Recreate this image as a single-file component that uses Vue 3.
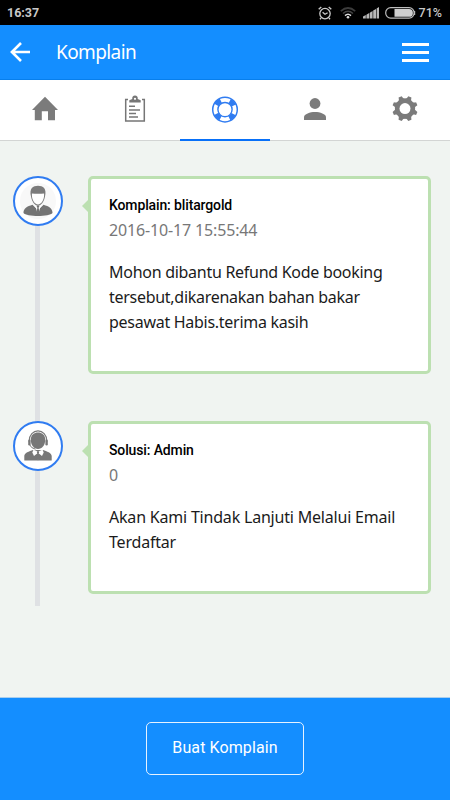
<template>
  <div class="screen">
    <div class="status-bar">
      <span class="clock">16:37</span>
      <div class="status-icons">
        <svg class="alarm" width="14" height="14" viewBox="0 0 14 14" fill="none" stroke="#c9c9c9">
          <circle cx="7" cy="7.6" r="5.2" stroke-width="1.3" />
          <path d="M.7 3.2 3.3.9M13.3 3.2 10.7.9M3 12l-1 1.2M11 12l1 1.2" stroke-width="1.4" />
          <path d="M4.6 6.2 7 8.3l2.6-1.6" stroke-width="1.3" />
        </svg>
        <svg class="wifi" width="16" height="12" viewBox="0 0 16 12" fill="none">
          <path d="M.8 4.2Q8-2.2 15.2 4.2" stroke="#3c3c3c" stroke-width="1.7" />
          <path d="M3 6.5Q8 2 13 6.5" stroke="#444" stroke-width="1.5" />
          <path d="M5 8.6Q8 6 11 8.6" stroke="#ddd" stroke-width="1.5" />
          <circle cx="8" cy="10.3" r="1.3" fill="#ddd" />
        </svg>
        <svg class="signal" width="17" height="12" viewBox="0 0 17 12" fill="#b8b8b8">
          <path d="M0 9.5 2.8 8v3.5H0zM3.4 7.8 6.2 6v5.5H3.4zM6.8 5.8 9.6 4v7.5H6.8zM10.2 3.6 13 2v9.5h-2.8zM13.6 1.5 16 0v11.5h-2.4z" />
        </svg>
        <svg class="battery" width="31" height="12" viewBox="0 0 31 12">
          <rect x=".7" y=".7" width="28.4" height="10.4" rx="5" fill="none" stroke="#bdbdbd" stroke-width="1.2" />
          <path d="M9.5 2H24a3.9 3.9 0 0 1 0 7.8H9.5z" fill="#cfcfcf" />
          <path d="M29.6 4v4" stroke="#bdbdbd" stroke-width="1.2" />
        </svg>
        <span class="percent">71%</span>
      </div>
    </div>

    <header class="app-bar">
      <svg class="back" width="20" height="20" viewBox="0 0 20 20" fill="none" stroke="#fff" stroke-width="2.6">
        <path d="M11 1 1.9 10 11 19M2 10h18" />
      </svg>
      <h1>Komplain</h1>
      <div class="menu"><i></i><i></i><i></i></div>
    </header>

    <nav class="tabs">
      <div v-for="tab in tabs" :key="tab" class="tab" :class="{ active: tab === 'help' }">
        <svg v-if="tab === 'home'" width="30" height="30" viewBox="0 0 30 30" fill="#7b7b7b">
          <path d="M15 2.8 28 15.9h-3v10.3h-7v-8.9h-6.2v8.9h-7V15.9H2z" />
        </svg>
        <svg v-else-if="tab === 'orders'" width="30" height="30" viewBox="0 0 30 30" fill="none" stroke="#767676">
          <path d="M8 5.5H5.700v21.600h18.600V5.500H22" stroke-width="1.5" />
          <path d="M9.300 8.400V6.200l3-1.200a2.800 2.800 0 1 1 5.400 0l3 1.200v2.200z" fill="#767676" stroke="none" />
          <circle cx="15" cy="4.8" r="1.1" fill="#fff" stroke="none" />
          <path d="M9 12.300h6M9 15.900h11M9 19.500h7M9 23.100h9" stroke-width="1.5" />
        </svg>
        <svg v-else-if="tab === 'help'" width="30" height="30" viewBox="0 0 30 30" fill="none" stroke="#307cf1">
          <circle cx="15" cy="15.6" r="9.7" stroke-width="5" stroke-dasharray="6.03 9.206" stroke-dashoffset="-4.6" />
          <circle cx="15" cy="15.6" r="12.3" stroke-width="1.5" />
          <circle cx="15" cy="15.6" r="7.1" stroke-width="1.4" />
        </svg>
        <svg v-else-if="tab === 'account'" width="30" height="30" viewBox="0 0 30 30" fill="#7b7b7b">
          <circle cx="15" cy="9.5" r="5.4" />
          <path d="M4 26.100v-2.700c0-3.400 6-5.300 11-5.300s11 1.900 11 5.300v2.700z" />
        </svg>
        <svg v-else width="30" height="30" viewBox="0 0 30 30">
          <g fill="#7b7b7b">
            <circle cx="15" cy="14.6" r="10.1" />
            <path
              v-for="n in 8"
              :key="n"
              d="M10.800 6Q13.300 4.800 13.300 1.900h3.400Q16.700 4.800 19.200 6z"
              :transform="`rotate(${n * 45 - 22.5} 15 14.6)`"
            />
          </g>
          <circle cx="15" cy="14.6" r="5.5" fill="#fff" />
        </svg>
      </div>
    </nav>

    <main class="timeline">
      <article v-for="item in items" :key="item.kind" class="entry" :class="item.kind">
        <div class="avatar">
          <svg v-if="item.kind === 'complaint'" width="44" height="44" viewBox="0 0 44 44">
            <circle cx="22" cy="22" r="18" fill="#f8f8f8" />
            <path d="M15 17.500C13 9.500 17 6.800 22 6.800s9 2.700 7 10.700c-.8 5-3.800 9.200-7 9.200s-6.200-4.200-7-9.200z" fill="#7b7b7b" />
            <path d="M15.900 14.500c4 .3 8.600.3 12.200 0v1.500c0 4.700-2.700 9.400-6.100 9.400s-6.100-4.700-6.100-9.400z" fill="#fff" />
            <path d="M7.500 34c0-4.800 3.500-6.500 9-8.200L22 31l5.500-5.200c5.500 1.700 9 3.400 9 8.200-3 4-26 4-29 0z" fill="#747474" />
            <path d="m17 25.600 3 3.400 1.300 5 .7-5 .7 5 1.300-5 3-3.400-5 3z" fill="#fff" />
            <path d="m20.600 27.300 1.400-1 1.400 1-.8 1.400.8 4L22 35l-1.400-2.300.8-4z" fill="#747474" />
          </svg>
          <svg v-else width="44" height="44" viewBox="0 0 44 44">
            <path d="M13.300 18v-1.500a8.700 9.700 0 0 1 17.400 0V18" fill="none" stroke="#7b7b7b" stroke-width="1.2" />
            <path d="M14.800 15.500C15 10.700 18.300 8.600 22 8.600s7 2.100 7.200 6.900c.2 5.500-3.200 9.500-7.200 9.500s-7.400-4-7.200-9.500z" fill="#777" />
            <rect x="12.2" y="15.5" width="2.4" height="6" rx="1.2" fill="#777" />
            <rect x="29.4" y="15.5" width="2.4" height="6" rx="1.2" fill="#777" />
            <path d="M13.500 20.500q1.500 3.800 6 4.700" fill="none" stroke="#777" />
            <path d="M8.300 36.400v-4.300c0-3.500 5-4.600 8.700-6.100h10c3.700 1.500 8.700 2.600 8.700 6.100v4.300z" fill="#777" />
            <path d="m17.500 25.800 4.500 1.700 4.500-1.700 1.200 2.700-1.700 3.500-2.800-2.200L22 36l-1.200-6.200L18 32l-1.700-3.500z" fill="#fff" />
            <path d="m20.700 27.700 1.300-.8 1.300.8-.5 1.500 1 4.500L22 36.400l-1.800-2.700 1-4.500z" fill="#777" />
          </svg>
        </div>
        <section class="card">
          <h2>{{ item.title }}</h2>
          <time>{{ item.date }}</time>
          <p>{{ item.text }}</p>
        </section>
      </article>
    </main>

    <footer class="bottom-bar">
      <button type="button">Buat Komplain</button>
    </footer>
  </div>
</template>

<script setup>
const tabs = ['home', 'orders', 'help', 'account', 'settings']

const items = [
  {
    kind: 'complaint',
    title: 'Komplain: blitargold',
    date: '2016-10-17 15:55:44',
    text: 'Mohon dibantu Refund Kode booking tersebut,dikarenakan bahan bakar pesawat Habis.terima kasih',
  },
  {
    kind: 'solution',
    title: 'Solusi: Admin',
    date: '0',
    text: 'Akan Kami Tindak Lanjuti Melalui Email Terdaftar',
  },
]
</script>

<style>
body { margin: 0; }
</style>

<style scoped>
.screen {
  width: 450px; height: 800px; overflow: hidden;
  display: flex; flex-direction: column;
  background: #f0f4f1;
  font-family: 'Noto Sans', sans-serif;
}

.status-bar {
  height: 25px; flex-shrink: 0; box-sizing: border-box;
  padding: 0 8px 0 7px;
  display: flex; align-items: center; justify-content: space-between;
  background: #000; color: #c8c8c8;
  font: bold 12.5px/25px Roboto, sans-serif;
}
.status-icons { display: flex; align-items: center; }
.alarm { margin-right: 1px; }
.wifi { margin-left: 7px; }
.signal { margin-left: 7px; }
.battery { margin-left: 5px; }
.percent { margin-left: 3px; font-weight: 500; }

.app-bar {
  height: 55px; flex-shrink: 0; box-sizing: border-box;
  display: flex; align-items: center;
  padding: 0 21px 0 10px;
  background: #148eff; border-bottom: 1px solid #087fec;
}
.app-bar h1 {
  margin: 0 0 0 26px; flex: 1;
  color: #fff; font-size: 19px; font-weight: 400; line-height: 26px;
  letter-spacing: -0.6px;
}
.menu { width: 27px; display: grid; gap: 5px; }
.menu i { height: 3px; background: #fff; }

.tabs {
  height: 61px; flex-shrink: 0;
  display: grid; grid-template-columns: repeat(5, 1fr);
  background: #fff;
}
.tab {
  box-sizing: border-box; padding-top: 14px;
  display: flex; justify-content: center; align-items: flex-start;
  border-bottom: 1px solid #d3d5d4;
}
.tab.active { border-bottom: 2px solid #0870f8; }

.timeline { flex: 1; padding: 35px 19px 0 12.5px; }
.entry {
  position: relative;
  display: flex; align-items: flex-start; gap: 25px;
  height: 245px;
}
.entry::before {
  content: ''; position: absolute; left: 22.5px; top: 10px;
  width: 5px; height: 245px;
  background: #dfe1e4;
}
.entry.solution { height: 185px; }
.entry.solution::before { top: 0; height: 185px; }

.avatar {
  position: relative;
  width: 50px; height: 50px; flex-shrink: 0; box-sizing: border-box;
  display: flex; align-items: center; justify-content: center;
  border: 2px solid #307cf1; border-radius: 50%;
  background: #fff;
}

.card {
  position: relative;
  flex: 1; box-sizing: border-box; height: 198px;
  padding: 16px 16px 0 18.5px;
  background: #fff;
  border: 3px solid #bce0b1; border-radius: 5px;
}
.solution .card { height: 173px; }
.card::before {
  content: ''; position: absolute; left: -9px; top: 21px;
  border: 6px solid transparent; border-right-color: #bce0b1; border-left: 0;
}
.card h2 {
  margin: 0;
  font: 500 14px/20px Roboto, sans-serif; color: #000;
  letter-spacing: -0.13px;
}
.card time {
  display: block; margin-top: 2px;
  font-size: 16px; line-height: 26px; color: #777;
  letter-spacing: -0.15px;
}
.card p {
  margin: 17px 0 0;
  font-size: 16px; line-height: 25px; color: #1b1b1b;
  letter-spacing: -0.28px;
}
.solution p { letter-spacing: -0.2px; }

.bottom-bar {
  height: 103px; flex-shrink: 0; box-sizing: border-box;
  padding-top: 24px;
  display: flex; justify-content: center; align-items: flex-start;
  background: #148eff; border-top: 1px solid #a9ceee;
}
.bottom-bar button {
  width: 158px; height: 53px; padding: 0 0 3px;
  background: none; border: 1.5px solid #e6f2ff; border-radius: 5px;
  font: 16px Roboto, sans-serif; color: #fff;
  letter-spacing: 0.1px;
}
</style>
